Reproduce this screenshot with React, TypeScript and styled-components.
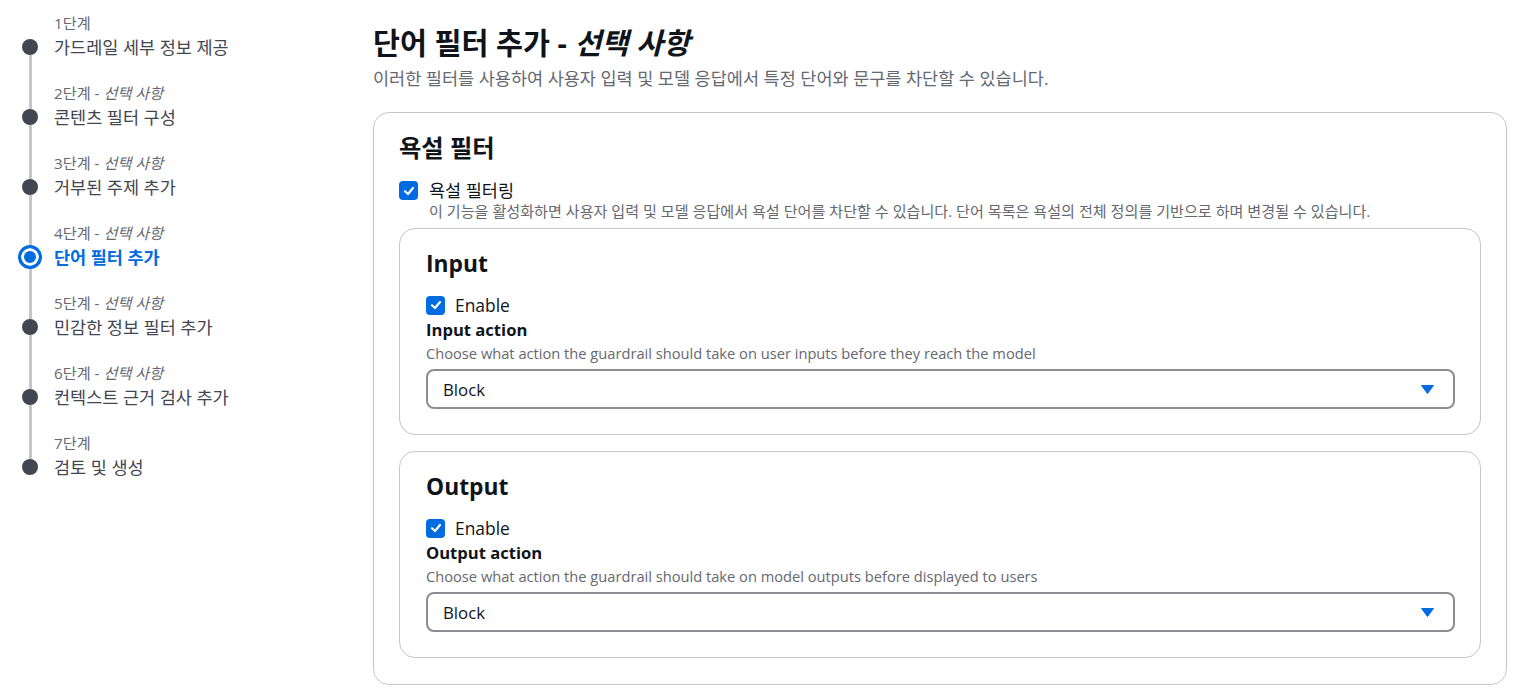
import React from 'react';
import styled, { createGlobalStyle } from 'styled-components';

const colors = {
  text: '#0f141a',
  body: '#424650',
  muted: '#656871',
  border: '#c6c6cd',
  input: '#8c8c94',
  blue: '#006ce0',
};

const font = `"Open Sans", "Noto Sans CJK KR", sans-serif`;

const GlobalStyle = createGlobalStyle`
  body {
    margin: 0;
    background: #ffffff;
    font-family: ${font};
    color: ${colors.text};
  }
`;

interface StepData {
  label: string;
  optional?: boolean;
  title: string;
  active?: boolean;
}

const steps: StepData[] = [
  { label: '1단계', title: '가드레일 세부 정보 제공' },
  { label: '2단계', optional: true, title: '콘텐츠 필터 구성' },
  { label: '3단계', optional: true, title: '거부된 주제 추가' },
  { label: '4단계', optional: true, title: '단어 필터 추가', active: true },
  { label: '5단계', optional: true, title: '민감한 정보 필터 추가' },
  { label: '6단계', optional: true, title: '컨텍스트 근거 검사 추가' },
  { label: '7단계', title: '검토 및 생성' },
];

const Check: React.FC = () => (
  <CheckBox>
    <svg width="12" height="12" viewBox="0 0 12 12">
      <polyline
        points="2,6.3 5,9 10,3"
        fill="none"
        stroke="#fff"
        strokeWidth="2.2"
        strokeLinecap="round"
        strokeLinejoin="round"
      />
    </svg>
  </CheckBox>
);

const Select: React.FC<{ value: string }> = ({ value }) => (
  <SelectBox>
    <span>{value}</span>
    <svg width="13" height="9" viewBox="0 0 13 9">
      <polygon points="0.5,0.5 12.5,0.5 6.5,8.5" fill={colors.blue} stroke={colors.blue} strokeLinejoin="round" />
    </svg>
  </SelectBox>
);

interface ActionProps {
  heading: string;
  label: string;
  hint: string;
}

const ActionPanel: React.FC<ActionProps> = ({ heading, label, hint }) => (
  <InnerCard>
    <CardHeading>{heading}</CardHeading>
    <EnableRow>
      <Check />
      <span>Enable</span>
    </EnableRow>
    <FieldLabel>{label}</FieldLabel>
    <FieldHint>{hint}</FieldHint>
    <Select value="Block" />
  </InnerCard>
);

const App: React.FC = () => (
  <Page>
    <GlobalStyle />
    <Nav>
      {steps.map((s, i) => (
        <Step key={s.label}>
          <Rail>
            <RailLine $hidden={i === 0} $height={s.active ? 23 : 27} />
            {s.active ? <ActiveDot /> : <Dot />}
            <RailLine $hidden={i === steps.length - 1} $grow />
          </Rail>
          <StepText>
            <StepLabel>
              {s.label}
              {s.optional && (
                <>
                  {' - '}
                  <em>선택 사항</em>
                </>
              )}
            </StepLabel>
            <StepTitle $active={s.active}>{s.title}</StepTitle>
          </StepText>
        </Step>
      ))}
    </Nav>

    <Main>
      <Title>
        단어 필터 추가 - <em>선택 사항</em>
      </Title>
      <Description>이러한 필터를 사용하여 사용자 입력 및 모델 응답에서 특정 단어와 문구를 차단할 수 있습니다.</Description>

      <OuterCard>
        <CardHeading $korean>욕설 필터</CardHeading>
        <FilterRow>
          <Check />
          <div>
            <FilterLabel>욕설 필터링</FilterLabel>
            <FilterHint>
              이 기능을 활성화하면 사용자 입력 및 모델 응답에서 욕설 단어를 차단할 수 있습니다. 단어 목록은 욕설의 전체 정의를
              기반으로 하며 변경될 수 있습니다.
            </FilterHint>
          </div>
        </FilterRow>
        <Panels>
          <ActionPanel
            heading="Input"
            label="Input action"
            hint="Choose what action the guardrail should take on user inputs before they reach the model"
          />
          <ActionPanel
            heading="Output"
            label="Output action"
            hint="Choose what action the guardrail should take on model outputs before displayed to users"
          />
        </Panels>
      </OuterCard>
    </Main>
  </Page>
);

const Page = styled('div')`
  display: flex;
  align-items: flex-start;
  min-height: 691px;
`;

const Nav = styled('nav')`
  width: 373px;
  flex: 0 0 373px;
  padding: 12px 0 0 18px;
  box-sizing: border-box;
`;

const Step = styled('div')`
  display: flex;
  height: 70px;
  gap: 12px;
`;

const Rail = styled('div')`
  width: 24px;
  display: flex;
  flex-direction: column;
  align-items: center;
`;

const RailLine = styled('div')<{ $hidden?: boolean; $height?: number; $grow?: boolean }>`
  width: 3px;
  background: ${(p) => (p.$hidden ? 'transparent' : colors.border)};
  height: ${(p) => (p.$height ? `${p.$height}px` : 'auto')};
  flex: ${(p) => (p.$grow ? '1' : '0 0 auto')};
`;

const Dot = styled('div')`
  width: 16px;
  height: 16px;
  border-radius: 50%;
  background: ${colors.body};
`;

const ActiveDot = styled('div')`
  width: 24px;
  height: 24px;
  box-sizing: border-box;
  border-radius: 50%;
  border: 3px solid ${colors.blue};
  background: ${colors.blue};
  box-shadow: inset 0 0 0 3px #fff;
`;

const StepText = styled('div')`
  display: flex;
  flex-direction: column;
  gap: 1px;
`;

const StepLabel = styled('div')`
  font-size: 15.2px;
  line-height: 22px;
  color: ${colors.muted};
`;

const StepTitle = styled('div')<{ $active?: boolean }>`
  font-size: 17.5px;
  line-height: 24px;
  color: ${(p) => (p.$active ? colors.blue : colors.body)};
  font-weight: ${(p) => (p.$active ? 700 : 400)};
`;

const Main = styled('main')`
  flex: 1;
  padding: 25px 11px 8px 0;
`;

const Title = styled('h1')`
  margin: 0;
  font-size: 29.3px;
  line-height: 36px;
  font-weight: 700;
  color: ${colors.text};
`;

const Description = styled('p')`
  margin: 5px 0 0;
  font-size: 17.5px;
  line-height: 24px;
  color: ${colors.muted};
`;

const OuterCard = styled('section')`
  margin-top: 22px;
  border: 1px solid ${colors.border};
  border-radius: 16px;
  padding: 21px 25px 26px;
`;

const CardHeading = styled('h2')<{ $korean?: boolean }>`
  margin: 0;
  font-size: ${(p) => (p.$korean ? '24.3px' : '22.8px')};
  line-height: 27px;
  font-weight: 700;
  color: ${colors.text};
`;

const CheckBox = styled('span')`
  width: 19px;
  height: 19px;
  flex: 0 0 19px;
  border-radius: 4px;
  background: ${colors.blue};
  display: inline-flex;
  align-items: center;
  justify-content: center;
`;

const FilterRow = styled('div')`
  display: flex;
  gap: 11px;
  margin-top: 18px;

  ${CheckBox} {
    margin-top: 2px;
  }
`;

const FilterLabel = styled('div')`
  font-size: 17.5px;
  line-height: 22px;
  color: ${colors.text};
`;

const FilterHint = styled('div')`
  font-size: 15.1px;
  line-height: 21px;
  color: ${colors.muted};
`;

const Panels = styled('div')`
  display: flex;
  flex-direction: column;
  gap: 16px;
  margin-top: 6px;
`;

const InnerCard = styled('div')`
  border: 1px solid ${colors.border};
  border-radius: 16px;
  padding: 21px 25px 25px 26px;
`;

const EnableRow = styled('div')`
  display: flex;
  align-items: center;
  gap: 10px;
  margin-top: 16px;
  font-size: 17.4px;
  line-height: 24px;
  color: ${colors.text};
`;

const FieldLabel = styled('div')`
  font-size: 16.6px;
  line-height: 25px;
  font-weight: 700;
  color: ${colors.text};
`;

const FieldHint = styled('div')`
  font-size: 14.66px;
  line-height: 22px;
  color: ${colors.muted};
`;

const SelectBox = styled('div')`
  margin-top: 5px;
  height: 40px;
  box-sizing: border-box;
  border: 2px solid ${colors.input};
  border-radius: 8px;
  padding: 0 19px 0 15px;
  display: flex;
  align-items: center;
  justify-content: space-between;
  font-size: 16.8px;
  color: ${colors.text};
`;

export default App;
